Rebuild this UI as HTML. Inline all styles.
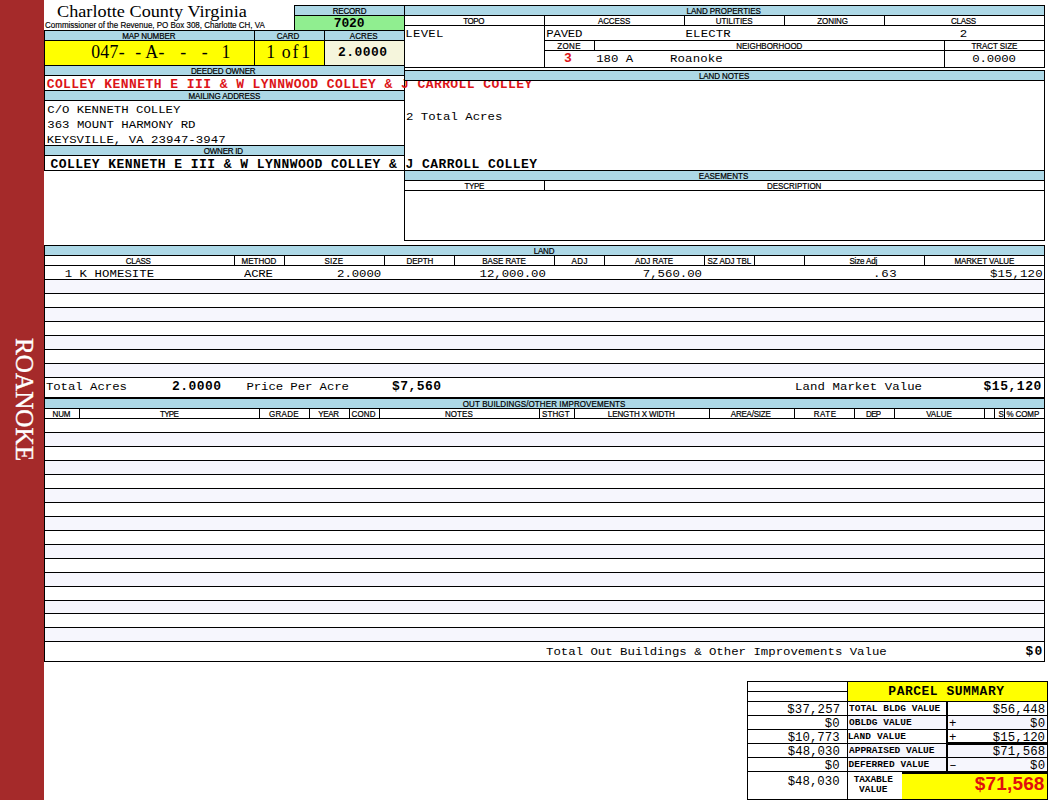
<!DOCTYPE html>
<html><head><meta charset="utf-8"><title>Charlotte County Virginia</title>
<style>
html,body{margin:0;padding:0;background:#fff;}
body{width:1050px;height:800px;position:relative;overflow:hidden;}
.r{position:absolute;}
.t{position:absolute;white-space:pre;color:#000;line-height:14px;height:14px;}
.lab{font-family:"Liberation Sans",sans-serif;font-size:8px;-webkit-text-stroke:0.2px #000;}
.sub{font-family:"Liberation Sans",sans-serif;font-size:8px;-webkit-text-stroke:0.15px #000;}
.title{font-family:"Liberation Serif",serif;font-size:18.2px;}
.big{font-family:"Liberation Serif",serif;font-size:17.8px;}
.m{font-family:"Liberation Mono",monospace;font-size:12.35px;}
.ps{font-family:"Liberation Mono",monospace;font-size:12.35px;}
.ob{font-family:"Liberation Mono",monospace;font-size:13px;font-weight:bold;}
.pl{font-family:"Liberation Mono",monospace;font-size:9.5px;font-weight:bold;}
.tv{font-family:"Liberation Sans",sans-serif;font-size:19px;font-weight:bold;}
.side{font-family:"Liberation Serif",serif;font-size:25.2px;color:#fff;-webkit-text-stroke:0.35px #fff;writing-mode:vertical-rl;line-height:44px;height:124px;text-align:center;}
</style></head>
<body>
<div class="r" style="left:0px;top:0px;width:44px;height:800px;background:#a52a2a;"></div>
<div class="t side" style="left:2px;top:337.5px;width:44px;height:124px;">ROANOKE</div>
<div id="t1" class="t title" style="left:57.00px;top:4.36px;letter-spacing:0.025px;transform:scaleY(0.925);transform-origin:0 13.14px;">Charlotte County Virginia</div>
<div id="t2" class="t sub" style="left:45.10px;top:19.03px;letter-spacing:-0.013px;transform:scaleY(1.08);transform-origin:0 9.77px;">Commissioner of the Revenue, PO Box 308, Charlotte CH, VA</div>
<div class="r" style="left:294px;top:5px;width:111px;height:26px;background:#000;"></div>
<div class="r" style="left:295px;top:6px;width:109px;height:9px;background:#add8e6;"></div>
<div class="r" style="left:295px;top:16px;width:109px;height:14px;background:#90ee90;"></div>
<div id="t3" class="t lab" style="left:332.80px;top:5.13px;letter-spacing:-0.200px;transform:scaleY(1.07);transform-origin:0 9.77px;">RECORD</div>
<div id="t4" class="t ob" style="left:333.75px;top:17.33px;letter-spacing:-0.150px;transform:scaleY(0.93);transform-origin:0 10.47px;">7020</div>
<div class="r" style="left:44px;top:30px;width:361px;height:141px;background:#000;"></div>
<div class="r" style="left:45px;top:31px;width:209px;height:9px;background:#add8e6;"></div>
<div id="t5" class="t lab" style="left:122.25px;top:30.13px;letter-spacing:-0.101px;transform:scaleY(1.07);transform-origin:0 9.77px;">MAP NUMBER</div>
<div class="r" style="left:255px;top:31px;width:69px;height:9px;background:#add8e6;"></div>
<div id="t6" class="t lab" style="left:276.80px;top:30.13px;letter-spacing:-0.052px;transform:scaleY(1.07);transform-origin:0 9.77px;">CARD</div>
<div class="r" style="left:325px;top:31px;width:79px;height:9px;background:#add8e6;"></div>
<div id="t7" class="t lab" style="left:349.75px;top:30.13px;letter-spacing:0.085px;transform:scaleY(1.07);transform-origin:0 9.77px;">ACRES</div>
<div class="r" style="left:45px;top:41px;width:209px;height:24px;background:#ffff00;"></div>
<div id="t8" class="t big" style="left:91.15px;top:44.99px;letter-spacing:0.337px;">047-</div>
<div id="t9" class="t big" style="left:135.20px;top:44.99px;letter-spacing:0.400px;">- A-</div>
<div id="t10" class="t big" style="left:180.20px;top:44.99px;letter-spacing:0.000px;">-</div>
<div id="t11" class="t big" style="left:201.80px;top:44.99px;letter-spacing:0.000px;">-</div>
<div id="t12" class="t big" style="left:221.40px;top:44.99px;letter-spacing:0.000px;">1</div>
<div class="r" style="left:255px;top:41px;width:69px;height:24px;background:#ffff00;"></div>
<div id="t13" class="t big" style="left:266.14px;top:44.99px;letter-spacing:0.000px;">1</div>
<div id="t14" class="t big" style="left:281.70px;top:44.99px;letter-spacing:2.000px;">of</div>
<div id="t15" class="t big" style="left:301.36px;top:44.99px;letter-spacing:0.000px;">1</div>
<div class="r" style="left:325px;top:41px;width:79px;height:24px;background:#f5f5dc;"></div>
<div id="t16" class="t ob" style="left:338.10px;top:45.63px;letter-spacing:0.450px;transform:scaleY(0.93);transform-origin:0 10.47px;">2.0000</div>
<div class="r" style="left:45px;top:66px;width:359px;height:9px;background:#add8e6;"></div>
<div id="t17" class="t lab" style="left:190.90px;top:65.03px;letter-spacing:-0.136px;transform:scaleY(1.07);transform-origin:0 9.77px;">DEEDED OWNER</div>
<div class="r" style="left:45px;top:76px;width:359px;height:14px;background:#fff;"></div>
<div class="r" style="left:45px;top:91px;width:359px;height:9px;background:#add8e6;"></div>
<div id="t18" class="t lab" style="left:188.54px;top:90.03px;letter-spacing:-0.118px;transform:scaleY(1.07);transform-origin:0 9.77px;">MAILING ADDRESS</div>
<div class="r" style="left:45px;top:101px;width:359px;height:44px;background:#fff;"></div>
<div id="t19" class="t m" style="left:47.25px;top:102.91px;letter-spacing:-0.012px;transform:scaleY(0.95);transform-origin:0 10.29px;">C/O KENNETH COLLEY</div>
<div id="t20" class="t m" style="left:47.30px;top:118.11px;letter-spacing:0.000px;transform:scaleY(0.95);transform-origin:0 10.29px;">363 MOUNT HARMONY RD</div>
<div id="t21" class="t m" style="left:46.80px;top:132.91px;letter-spacing:0.043px;transform:scaleY(0.95);transform-origin:0 10.29px;">KEYSVILLE, VA 23947-3947</div>
<div class="r" style="left:45px;top:146px;width:359px;height:9px;background:#add8e6;"></div>
<div id="t22" class="t lab" style="left:203.80px;top:145.03px;letter-spacing:-0.233px;transform:scaleY(1.07);transform-origin:0 9.77px;">OWNER ID</div>
<div class="r" style="left:45px;top:156px;width:359px;height:14px;background:#fff;"></div>
<div class="r" style="left:404px;top:5px;width:641px;height:63px;background:#000;"></div>
<div class="r" style="left:405px;top:6px;width:639px;height:9px;background:#add8e6;"></div>
<div id="t23" class="t lab" style="left:686.50px;top:5.13px;letter-spacing:-0.049px;transform:scaleY(1.07);transform-origin:0 9.77px;">LAND PROPERTIES</div>
<div class="r" style="left:405px;top:16px;width:139px;height:9px;background:#fff;"></div>
<div class="r" style="left:545px;top:16px;width:139px;height:9px;background:#fff;"></div>
<div class="r" style="left:685px;top:16px;width:99px;height:9px;background:#fff;"></div>
<div class="r" style="left:785px;top:16px;width:99px;height:9px;background:#fff;"></div>
<div class="r" style="left:885px;top:16px;width:159px;height:9px;background:#fff;"></div>
<div id="t24" class="t lab" style="left:463.35px;top:15.13px;letter-spacing:-0.488px;transform:scaleY(1.07);transform-origin:0 9.77px;">TOPO</div>
<div id="t25" class="t lab" style="left:598.00px;top:15.13px;letter-spacing:-0.120px;transform:scaleY(1.07);transform-origin:0 9.77px;">ACCESS</div>
<div id="t26" class="t lab" style="left:715.80px;top:15.13px;letter-spacing:-0.059px;transform:scaleY(1.07);transform-origin:0 9.77px;">UTILITIES</div>
<div id="t27" class="t lab" style="left:817.30px;top:15.13px;letter-spacing:-0.080px;transform:scaleY(1.07);transform-origin:0 9.77px;">ZONING</div>
<div id="t28" class="t lab" style="left:951.05px;top:15.13px;letter-spacing:-0.295px;transform:scaleY(1.07);transform-origin:0 9.77px;">CLASS</div>
<div class="r" style="left:405px;top:26px;width:139px;height:41px;background:#fff;"></div>
<div class="r" style="left:545px;top:26px;width:499px;height:14px;background:#fff;"></div>
<div id="t29" class="t m" style="left:405.30px;top:26.91px;letter-spacing:0.275px;transform:scaleY(0.95);transform-origin:0 10.29px;">LEVEL</div>
<div id="t30" class="t m" style="left:546.32px;top:26.91px;letter-spacing:-0.225px;transform:scaleY(0.95);transform-origin:0 10.29px;">PAVED</div>
<div id="t31" class="t m" style="left:685.50px;top:26.91px;letter-spacing:0.160px;transform:scaleY(0.95);transform-origin:0 10.29px;">ELECTR</div>
<div id="t32" class="t m" style="left:959.70px;top:26.91px;letter-spacing:0.000px;transform:scaleY(0.95);transform-origin:0 10.29px;">2</div>
<div class="r" style="left:545px;top:41px;width:49px;height:9px;background:#fff;"></div>
<div class="r" style="left:595px;top:41px;width:349px;height:9px;background:#fff;"></div>
<div class="r" style="left:945px;top:41px;width:99px;height:9px;background:#fff;"></div>
<div id="t33" class="t lab" style="left:557.15px;top:40.03px;letter-spacing:0.380px;transform:scaleY(1.07);transform-origin:0 9.77px;">ZONE</div>
<div id="t34" class="t lab" style="left:736.30px;top:40.03px;letter-spacing:-0.054px;transform:scaleY(1.07);transform-origin:0 9.77px;">NEIGHBORHOOD</div>
<div id="t35" class="t lab" style="left:971.50px;top:40.03px;letter-spacing:-0.077px;transform:scaleY(1.07);transform-origin:0 9.77px;">TRACT SIZE</div>
<div class="r" style="left:545px;top:51px;width:399px;height:16px;background:#fff;"></div>
<div class="r" style="left:945px;top:51px;width:99px;height:16px;background:#fff;"></div>
<div id="t36" class="t ob" style="left:564.00px;top:51.63px;letter-spacing:0.450px;transform:scaleY(0.93);transform-origin:0 10.47px;color:#dc1418;">3</div>
<div id="t37" class="t m" style="left:596.15px;top:51.51px;letter-spacing:0.000px;transform:scaleY(0.95);transform-origin:0 10.29px;">180 A</div>
<div id="t38" class="t m" style="left:669.93px;top:51.51px;letter-spacing:0.167px;transform:scaleY(0.95);transform-origin:0 10.29px;">Roanoke</div>
<div id="t39" class="t m" style="left:972.25px;top:51.51px;letter-spacing:-0.144px;transform:scaleY(0.95);transform-origin:0 10.29px;">0.0000</div>
<div id="t40" class="t ob" style="left:46.65px;top:77.63px;letter-spacing:0.438px;transform:scaleY(0.93);transform-origin:0 10.47px;z-index:2;color:#dc1418;">COLLEY KENNETH E III &amp; W LYNNWOOD COLLEY &amp; J CARROLL COLLEY</div>
<div class="r" style="left:404px;top:70px;width:641px;height:11px;background:#000;z-index:3;"></div>
<div class="r" style="left:405px;top:71px;width:639px;height:9px;background:#add8e6;z-index:3;"></div>
<div id="t41" class="t lab" style="left:698.94px;top:70.03px;letter-spacing:-0.094px;transform:scaleY(1.07);transform-origin:0 9.77px;z-index:4;">LAND NOTES</div>
<div class="r" style="left:404px;top:80px;width:1px;height:161px;background:#000;"></div>
<div class="r" style="left:1044px;top:80px;width:1px;height:161px;background:#000;"></div>
<div id="t42" class="t m" style="left:405.98px;top:109.91px;letter-spacing:0.003px;transform:scaleY(0.95);transform-origin:0 10.29px;">2 Total Acres</div>
<div class="r" style="left:404px;top:170px;width:641px;height:11px;background:#000;"></div>
<div class="r" style="left:405px;top:171px;width:639px;height:9px;background:#add8e6;"></div>
<div id="t43" class="t lab" style="left:698.83px;top:170.03px;letter-spacing:0.005px;transform:scaleY(1.07);transform-origin:0 9.77px;">EASEMENTS</div>
<div id="t44" class="t lab" style="left:464.60px;top:180.13px;letter-spacing:-0.387px;transform:scaleY(1.07);transform-origin:0 9.77px;">TYPE</div>
<div id="t45" class="t lab" style="left:766.90px;top:180.13px;letter-spacing:-0.020px;transform:scaleY(1.07);transform-origin:0 9.77px;">DESCRIPTION</div>
<div class="r" style="left:544px;top:181px;width:1px;height:9px;background:#000;"></div>
<div class="r" style="left:404px;top:190px;width:641px;height:1px;background:#000;"></div>
<div class="r" style="left:404px;top:240px;width:641px;height:1px;background:#000;"></div>
<div id="t46" class="t ob" style="left:50.58px;top:157.83px;letter-spacing:0.450px;transform:scaleY(0.93);transform-origin:0 10.47px;z-index:5;">COLLEY KENNETH E III &amp; W LYNNWOOD COLLEY &amp; J CARROLL COLLEY</div>
<div class="r" style="left:44px;top:245px;width:1001px;height:11px;background:#000;"></div>
<div class="r" style="left:45px;top:246px;width:999px;height:9px;background:#add8e6;"></div>
<div id="t47" class="t lab" style="left:533.68px;top:245.13px;letter-spacing:-0.194px;transform:scaleY(1.07);transform-origin:0 9.77px;">LAND</div>
<div class="r" style="left:44px;top:245px;width:1px;height:154px;background:#000;"></div>
<div class="r" style="left:1044px;top:245px;width:1px;height:154px;background:#000;"></div>
<div class="r" style="left:234px;top:256px;width:1px;height:9px;background:#000;"></div>
<div class="r" style="left:284px;top:256px;width:1px;height:9px;background:#000;"></div>
<div class="r" style="left:384px;top:256px;width:1px;height:9px;background:#000;"></div>
<div class="r" style="left:454px;top:256px;width:1px;height:9px;background:#000;"></div>
<div class="r" style="left:554px;top:256px;width:1px;height:9px;background:#000;"></div>
<div class="r" style="left:604px;top:256px;width:1px;height:9px;background:#000;"></div>
<div class="r" style="left:704px;top:256px;width:1px;height:9px;background:#000;"></div>
<div class="r" style="left:754px;top:256px;width:1px;height:9px;background:#000;"></div>
<div class="r" style="left:804px;top:256px;width:1px;height:9px;background:#000;"></div>
<div class="r" style="left:924px;top:256px;width:1px;height:9px;background:#000;"></div>
<div id="t48" class="t lab" style="left:125.80px;top:255.13px;letter-spacing:-0.270px;transform:scaleY(1.07);transform-origin:0 9.77px;">CLASS</div>
<div id="t49" class="t lab" style="left:241.46px;top:255.13px;letter-spacing:0.040px;transform:scaleY(1.07);transform-origin:0 9.77px;">METHOD</div>
<div id="t50" class="t lab" style="left:324.50px;top:255.13px;letter-spacing:0.281px;transform:scaleY(1.07);transform-origin:0 9.77px;">SIZE</div>
<div id="t51" class="t lab" style="left:406.50px;top:255.13px;letter-spacing:-0.070px;transform:scaleY(1.07);transform-origin:0 9.77px;">DEPTH</div>
<div id="t52" class="t lab" style="left:482.28px;top:255.13px;letter-spacing:-0.084px;transform:scaleY(1.07);transform-origin:0 9.77px;">BASE RATE</div>
<div id="t53" class="t lab" style="left:571.50px;top:255.13px;letter-spacing:0.480px;transform:scaleY(1.07);transform-origin:0 9.77px;">ADJ</div>
<div id="t54" class="t lab" style="left:635.10px;top:255.13px;letter-spacing:-0.004px;transform:scaleY(1.07);transform-origin:0 9.77px;">ADJ RATE</div>
<div id="t55" class="t lab" style="left:707.50px;top:255.13px;letter-spacing:-0.018px;transform:scaleY(1.07);transform-origin:0 9.77px;">SZ ADJ TBL</div>
<div id="t56" class="t lab" style="left:849.40px;top:255.13px;letter-spacing:-0.136px;transform:scaleY(1.07);transform-origin:0 9.77px;">Size Adj</div>
<div id="t57" class="t lab" style="left:954.40px;top:255.13px;letter-spacing:-0.104px;transform:scaleY(1.07);transform-origin:0 9.77px;">MARKET VALUE</div>
<div class="r" style="left:44px;top:265px;width:1001px;height:1px;background:#000;"></div>
<div class="r" style="left:45px;top:266px;width:999px;height:13px;background:#fff;"></div>
<div class="r" style="left:44px;top:279px;width:1001px;height:1px;background:#000;"></div>
<div class="r" style="left:45px;top:280px;width:999px;height:13px;background:#f6f6fd;"></div>
<div class="r" style="left:44px;top:293px;width:1001px;height:1px;background:#000;"></div>
<div class="r" style="left:45px;top:294px;width:999px;height:13px;background:#fff;"></div>
<div class="r" style="left:44px;top:307px;width:1001px;height:1px;background:#000;"></div>
<div class="r" style="left:45px;top:308px;width:999px;height:13px;background:#f6f6fd;"></div>
<div class="r" style="left:44px;top:321px;width:1001px;height:1px;background:#000;"></div>
<div class="r" style="left:45px;top:322px;width:999px;height:13px;background:#fff;"></div>
<div class="r" style="left:44px;top:335px;width:1001px;height:1px;background:#000;"></div>
<div class="r" style="left:45px;top:336px;width:999px;height:13px;background:#f6f6fd;"></div>
<div class="r" style="left:44px;top:349px;width:1001px;height:1px;background:#000;"></div>
<div class="r" style="left:45px;top:350px;width:999px;height:13px;background:#fff;"></div>
<div class="r" style="left:44px;top:363px;width:1001px;height:1px;background:#000;"></div>
<div class="r" style="left:45px;top:364px;width:999px;height:13px;background:#f6f6fd;"></div>
<div class="r" style="left:44px;top:377px;width:1001px;height:1px;background:#000;"></div>
<div id="t58" class="t m" style="left:64.70px;top:266.81px;letter-spacing:0.054px;transform:scaleY(0.95);transform-origin:0 10.29px;">1 K HOMESITE</div>
<div id="t59" class="t m" style="left:244.00px;top:266.81px;letter-spacing:-0.267px;transform:scaleY(0.95);transform-origin:0 10.29px;">ACRE</div>
<div id="t60" class="t m" style="left:337.10px;top:266.81px;letter-spacing:-0.080px;transform:scaleY(0.95);transform-origin:0 10.29px;">2.0000</div>
<div id="t61" class="t m" style="left:479.60px;top:266.81px;letter-spacing:-0.050px;transform:scaleY(0.95);transform-origin:0 10.29px;">12,000.00</div>
<div id="t62" class="t m" style="left:642.75px;top:266.81px;letter-spacing:0.000px;transform:scaleY(0.95);transform-origin:0 10.29px;">7,560.00</div>
<div id="t63" class="t m" style="left:873.10px;top:266.81px;letter-spacing:0.650px;transform:scaleY(0.95);transform-origin:0 10.29px;">.63</div>
<div id="t64" class="t m" style="left:989.91px;top:266.81px;letter-spacing:0.130px;transform:scaleY(0.95);transform-origin:0 10.29px;">$15,120</div>
<div id="t65" class="t m" style="left:45.89px;top:379.91px;letter-spacing:-0.040px;transform:scaleY(0.95);transform-origin:0 10.29px;">Total Acres</div>
<div id="t66" class="t ob" style="left:172.05px;top:380.03px;letter-spacing:0.450px;transform:scaleY(0.93);transform-origin:0 10.47px;">2.0000</div>
<div id="t67" class="t m" style="left:246.45px;top:379.91px;letter-spacing:-0.093px;transform:scaleY(0.95);transform-origin:0 10.29px;">Price Per Acre</div>
<div id="t68" class="t ob" style="left:392.00px;top:380.03px;letter-spacing:0.450px;transform:scaleY(0.93);transform-origin:0 10.47px;">$7,560</div>
<div id="t69" class="t m" style="left:795.11px;top:379.91px;letter-spacing:0.062px;transform:scaleY(0.95);transform-origin:0 10.29px;">Land Market Value</div>
<div id="t70" class="t ob" style="left:983.45px;top:380.03px;letter-spacing:0.550px;transform:scaleY(0.93);transform-origin:0 10.47px;">$15,120</div>
<div class="r" style="left:44px;top:397px;width:1001px;height:2px;background:#000;"></div>
<div class="r" style="left:45px;top:399px;width:999px;height:9px;background:#add8e6;"></div>
<div id="t71" class="t lab" style="left:462.81px;top:398.13px;letter-spacing:0.102px;transform:scaleY(1.07);transform-origin:0 9.77px;">OUT BUILDINGS/OTHER IMPROVEMENTS</div>
<div class="r" style="left:44px;top:408px;width:1001px;height:1px;background:#000;"></div>
<div class="r" style="left:44px;top:399px;width:1px;height:263px;background:#000;"></div>
<div class="r" style="left:1044px;top:399px;width:1px;height:263px;background:#000;"></div>
<div class="r" style="left:79px;top:409px;width:1px;height:9px;background:#000;"></div>
<div class="r" style="left:259px;top:409px;width:1px;height:9px;background:#000;"></div>
<div class="r" style="left:309px;top:409px;width:1px;height:9px;background:#000;"></div>
<div class="r" style="left:349px;top:409px;width:1px;height:9px;background:#000;"></div>
<div class="r" style="left:379px;top:409px;width:1px;height:9px;background:#000;"></div>
<div class="r" style="left:539px;top:409px;width:1px;height:9px;background:#000;"></div>
<div class="r" style="left:574px;top:409px;width:1px;height:9px;background:#000;"></div>
<div class="r" style="left:709px;top:409px;width:1px;height:9px;background:#000;"></div>
<div class="r" style="left:794px;top:409px;width:1px;height:9px;background:#000;"></div>
<div class="r" style="left:854px;top:409px;width:1px;height:9px;background:#000;"></div>
<div class="r" style="left:894px;top:409px;width:1px;height:9px;background:#000;"></div>
<div class="r" style="left:984px;top:409px;width:1px;height:9px;background:#000;"></div>
<div class="r" style="left:994px;top:409px;width:1px;height:9px;background:#000;"></div>
<div class="r" style="left:1004px;top:409px;width:1px;height:9px;background:#000;"></div>
<div id="t72" class="t lab" style="left:52.50px;top:408.03px;letter-spacing:-0.120px;transform:scaleY(1.07);transform-origin:0 9.77px;">NUM</div>
<div id="t73" class="t lab" style="left:160.10px;top:408.03px;letter-spacing:-0.721px;transform:scaleY(1.07);transform-origin:0 9.77px;">TYPE</div>
<div id="t74" class="t lab" style="left:268.90px;top:408.03px;letter-spacing:0.302px;transform:scaleY(1.07);transform-origin:0 9.77px;">GRADE</div>
<div id="t75" class="t lab" style="left:318.16px;top:408.03px;letter-spacing:-0.320px;transform:scaleY(1.07);transform-origin:0 9.77px;">YEAR</div>
<div id="t76" class="t lab" style="left:351.59px;top:408.03px;letter-spacing:0.147px;transform:scaleY(1.07);transform-origin:0 9.77px;">COND</div>
<div id="t77" class="t lab" style="left:444.90px;top:408.03px;letter-spacing:0.080px;transform:scaleY(1.07);transform-origin:0 9.77px;">NOTES</div>
<div id="t78" class="t lab" style="left:541.95px;top:408.03px;letter-spacing:0.130px;transform:scaleY(1.07);transform-origin:0 9.77px;">STHGT</div>
<div id="t79" class="t lab" style="left:607.85px;top:408.03px;letter-spacing:-0.119px;transform:scaleY(1.07);transform-origin:0 9.77px;">LENGTH X WIDTH</div>
<div id="t80" class="t lab" style="left:730.80px;top:408.03px;letter-spacing:-0.224px;transform:scaleY(1.07);transform-origin:0 9.77px;">AREA/SIZE</div>
<div id="t81" class="t lab" style="left:813.80px;top:408.03px;letter-spacing:0.481px;transform:scaleY(1.07);transform-origin:0 9.77px;">RATE</div>
<div id="t82" class="t lab" style="left:866.00px;top:408.03px;letter-spacing:-0.620px;transform:scaleY(1.07);transform-origin:0 9.77px;">DEP</div>
<div id="t83" class="t lab" style="left:926.14px;top:408.03px;letter-spacing:-0.000px;transform:scaleY(1.07);transform-origin:0 9.77px;">VALUE</div>
<div id="t84" class="t lab" style="left:998.56px;top:408.03px;letter-spacing:-0.120px;transform:scaleY(1.07);transform-origin:0 9.77px;">S</div>
<div id="t85" class="t lab" style="left:1006.50px;top:408.03px;letter-spacing:-0.120px;transform:scaleY(1.07);transform-origin:0 9.77px;">% COMP</div>
<div class="r" style="left:44px;top:418px;width:1001px;height:1px;background:#000;"></div>
<div class="r" style="left:45px;top:419px;width:999px;height:13px;background:#fff;"></div>
<div class="r" style="left:44px;top:432px;width:1001px;height:1px;background:#000;"></div>
<div class="r" style="left:45px;top:433px;width:999px;height:13px;background:#f6f6fd;"></div>
<div class="r" style="left:44px;top:446px;width:1001px;height:1px;background:#000;"></div>
<div class="r" style="left:45px;top:447px;width:999px;height:13px;background:#fff;"></div>
<div class="r" style="left:44px;top:460px;width:1001px;height:1px;background:#000;"></div>
<div class="r" style="left:45px;top:461px;width:999px;height:13px;background:#f6f6fd;"></div>
<div class="r" style="left:44px;top:474px;width:1001px;height:1px;background:#000;"></div>
<div class="r" style="left:45px;top:475px;width:999px;height:13px;background:#fff;"></div>
<div class="r" style="left:44px;top:488px;width:1001px;height:1px;background:#000;"></div>
<div class="r" style="left:45px;top:489px;width:999px;height:13px;background:#f6f6fd;"></div>
<div class="r" style="left:44px;top:502px;width:1001px;height:1px;background:#000;"></div>
<div class="r" style="left:45px;top:503px;width:999px;height:13px;background:#fff;"></div>
<div class="r" style="left:44px;top:516px;width:1001px;height:1px;background:#000;"></div>
<div class="r" style="left:45px;top:517px;width:999px;height:13px;background:#f6f6fd;"></div>
<div class="r" style="left:44px;top:530px;width:1001px;height:1px;background:#000;"></div>
<div class="r" style="left:45px;top:531px;width:999px;height:13px;background:#fff;"></div>
<div class="r" style="left:44px;top:544px;width:1001px;height:1px;background:#000;"></div>
<div class="r" style="left:45px;top:545px;width:999px;height:13px;background:#f6f6fd;"></div>
<div class="r" style="left:44px;top:558px;width:1001px;height:1px;background:#000;"></div>
<div class="r" style="left:45px;top:559px;width:999px;height:13px;background:#fff;"></div>
<div class="r" style="left:44px;top:572px;width:1001px;height:1px;background:#000;"></div>
<div class="r" style="left:45px;top:573px;width:999px;height:13px;background:#f6f6fd;"></div>
<div class="r" style="left:44px;top:586px;width:1001px;height:1px;background:#000;"></div>
<div class="r" style="left:45px;top:587px;width:999px;height:13px;background:#fff;"></div>
<div class="r" style="left:44px;top:600px;width:1001px;height:1px;background:#000;"></div>
<div class="r" style="left:45px;top:601px;width:999px;height:12px;background:#f6f6fd;"></div>
<div class="r" style="left:44px;top:613px;width:1001px;height:1px;background:#000;"></div>
<div class="r" style="left:45px;top:614px;width:999px;height:13px;background:#fff;"></div>
<div class="r" style="left:44px;top:627px;width:1001px;height:1px;background:#000;"></div>
<div class="r" style="left:45px;top:628px;width:999px;height:13px;background:#f6f6fd;"></div>
<div class="r" style="left:44px;top:641px;width:1001px;height:1px;background:#000;"></div>
<div id="t86" class="t m" style="left:546.00px;top:645.11px;letter-spacing:0.000px;transform:scaleY(0.95);transform-origin:0 10.29px;">Total Out Buildings &amp; Other Improvements Value</div>
<div id="t87" class="t ob" style="left:1025.61px;top:645.23px;letter-spacing:1.170px;transform:scaleY(0.93);transform-origin:0 10.47px;">$0</div>
<div class="r" style="left:44px;top:661px;width:1001px;height:1px;background:#000;"></div>
<div class="r" style="left:747px;top:681px;width:301px;height:119px;background:#000;"></div>
<div class="r" style="left:748px;top:682px;width:99px;height:9px;background:#fff;"></div>
<div class="r" style="left:748px;top:692px;width:99px;height:9px;background:#fff;"></div>
<div class="r" style="left:848px;top:682px;width:199px;height:19px;background:#ffff00;"></div>
<div id="t88" class="t ob" style="left:888.35px;top:684.73px;letter-spacing:0.496px;transform:scaleY(0.93);transform-origin:0 10.47px;">PARCEL SUMMARY</div>
<div class="r" style="left:748px;top:702px;width:99px;height:13px;background:#fff;"></div>
<div id="t89" class="t ps" style="left:787.27px;top:702.71px;letter-spacing:0.182px;">$37,257</div>
<div class="r" style="left:848px;top:702px;width:98px;height:13px;background:#fff;"></div>
<div id="t90" class="t pl" style="left:849.00px;top:702.17px;letter-spacing:0.000px;transform:scaleY(0.9);transform-origin:0 9.53px;">TOTAL BLDG VALUE</div>
<div class="r" style="left:948px;top:702px;width:99px;height:13px;background:#fff;"></div>
<div id="t91" class="t ps" style="left:992.85px;top:702.71px;letter-spacing:0.060px;">$56,448</div>
<div class="r" style="left:748px;top:716px;width:99px;height:13px;background:#fff;"></div>
<div id="t92" class="t ps" style="left:824.79px;top:716.51px;letter-spacing:0.000px;">$0</div>
<div class="r" style="left:848px;top:716px;width:98px;height:13px;background:#f6f6fd;"></div>
<div id="t93" class="t pl" style="left:849.00px;top:715.97px;letter-spacing:0.000px;transform:scaleY(0.9);transform-origin:0 9.53px;">OBLDG VALUE</div>
<div class="r" style="left:948px;top:716px;width:99px;height:13px;background:#f6f6fd;"></div>
<div id="t94" class="t ps" style="left:1029.99px;top:716.51px;letter-spacing:0.440px;">$0</div>
<div id="t95" class="t ps" style="left:949.10px;top:716.51px;letter-spacing:0.000px;">+</div>
<div class="r" style="left:748px;top:730px;width:99px;height:13px;background:#fff;"></div>
<div id="t96" class="t ps" style="left:787.64px;top:730.51px;letter-spacing:0.030px;">$10,773</div>
<div class="r" style="left:848px;top:730px;width:98px;height:13px;background:#fff;"></div>
<div id="t97" class="t pl" style="left:847.70px;top:729.97px;letter-spacing:0.144px;transform:scaleY(0.9);transform-origin:0 9.53px;">LAND VALUE</div>
<div class="r" style="left:948px;top:730px;width:99px;height:13px;background:#fff;"></div>
<div id="t98" class="t ps" style="left:992.82px;top:730.51px;letter-spacing:0.060px;">$15,120</div>
<div id="t99" class="t ps" style="left:949.10px;top:730.51px;letter-spacing:0.000px;">+</div>
<div class="r" style="left:748px;top:744px;width:99px;height:13px;background:#fff;"></div>
<div id="t100" class="t ps" style="left:787.75px;top:744.51px;letter-spacing:0.060px;">$48,030</div>
<div class="r" style="left:848px;top:744px;width:98px;height:13px;background:#f6f6fd;"></div>
<div id="t101" class="t pl" style="left:849.00px;top:743.97px;letter-spacing:0.000px;transform:scaleY(0.9);transform-origin:0 9.53px;">APPRAISED VALUE</div>
<div class="r" style="left:948px;top:744px;width:99px;height:13px;background:#f6f6fd;"></div>
<div id="t102" class="t ps" style="left:992.85px;top:744.51px;letter-spacing:0.060px;">$71,568</div>
<div class="r" style="left:748px;top:758px;width:99px;height:13px;background:#fff;"></div>
<div id="t103" class="t ps" style="left:824.79px;top:758.51px;letter-spacing:0.000px;">$0</div>
<div class="r" style="left:848px;top:758px;width:98px;height:13px;background:#f6f6fd;"></div>
<div id="t104" class="t pl" style="left:848.47px;top:757.97px;letter-spacing:0.072px;transform:scaleY(0.9);transform-origin:0 9.53px;">DEFERRED VALUE</div>
<div class="r" style="left:948px;top:758px;width:99px;height:13px;background:#f6f6fd;"></div>
<div id="t105" class="t ps" style="left:1029.99px;top:758.51px;letter-spacing:0.440px;">$0</div>
<div id="t106" class="t ps" style="left:949.30px;top:758.51px;letter-spacing:0.000px;">–</div>
<div class="r" style="left:946px;top:742px;width:101px;height:3px;background:#000;"></div>
<div class="r" style="left:902px;top:771px;width:145px;height:3px;background:#000;"></div>
<div class="r" style="left:748px;top:772px;width:99px;height:27px;background:#fff;"></div>
<div id="t107" class="t ps" style="left:787.70px;top:774.51px;letter-spacing:0.000px;">$48,030</div>
<div class="r" style="left:848px;top:772px;width:54px;height:27px;background:#fff;"></div>
<div id="t108" class="t pl" style="left:853.65px;top:772.97px;letter-spacing:-0.117px;transform:scaleY(0.9);transform-origin:0 9.53px;">TAXABLE</div>
<div id="t109" class="t pl" style="left:859.00px;top:783.27px;letter-spacing:0.000px;transform:scaleY(0.9);transform-origin:0 9.53px;">VALUE</div>
<div class="r" style="left:902px;top:774px;width:145px;height:25px;background:#ffff00;"></div>
<div id="t110" class="t tv" style="left:974.76px;top:777.22px;letter-spacing:0.166px;color:#e0100c;">$71,568</div>
</body></html>
